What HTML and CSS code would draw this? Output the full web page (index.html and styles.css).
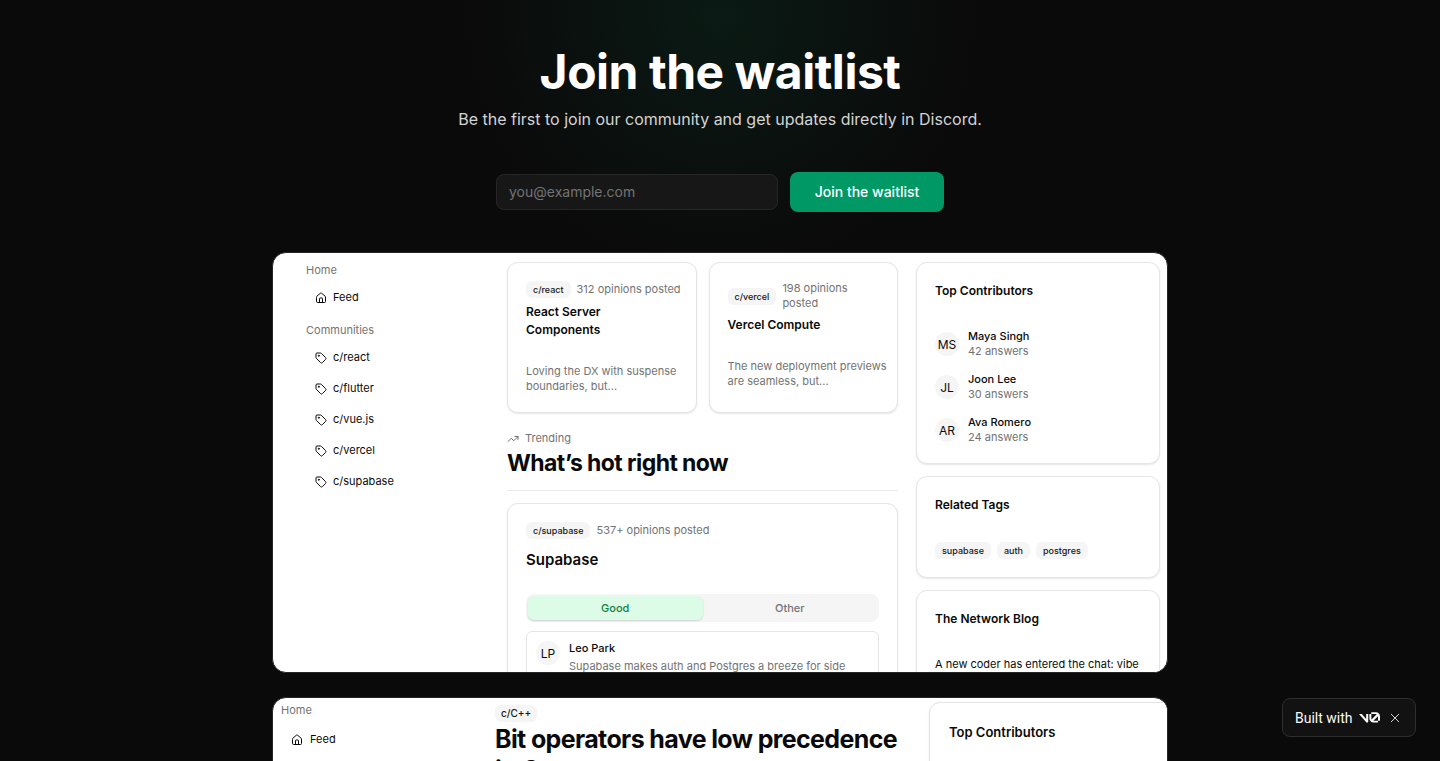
FILE: index.html
```
<!DOCTYPE html>
<html lang="en">
<head>
    <meta charset="UTF-8">
    <meta name="viewport" content="width=device-width, initial-scale=1.0">
    <link rel="stylesheet" href="styles.css">
    <title>Join the waitlist</title>
</head>
<body>

    <!-- Shared icons -->
    <svg class="sprite" aria-hidden="true">
        <symbol id="icon-home" viewBox="0 0 24 24">
            <path d="M15 21v-8a1 1 0 0 0-1-1h-4a1 1 0 0 0-1 1v8"/>
            <path d="M3 10a2 2 0 0 1 .709-1.528l7-5.999a2 2 0 0 1 2.582 0l7 5.999A2 2 0 0 1 21 10v9a2 2 0 0 1-2 2H5a2 2 0 0 1-2-2z"/>
        </symbol>
        <symbol id="icon-tag" viewBox="0 0 24 24">
            <path d="M12.586 2.586A2 2 0 0 0 11.172 2H4a2 2 0 0 0-2 2v7.172a2 2 0 0 0 .586 1.414l8.704 8.704a2.426 2.426 0 0 0 3.42 0l6.58-6.58a2.426 2.426 0 0 0 0-3.42z"/>
            <circle cx="7.5" cy="7.5" r="1"/>
        </symbol>
        <symbol id="icon-trending" viewBox="0 0 24 24">
            <path d="M16 7h6v6"/>
            <path d="m22 7-8.500 8.500-5-5L2 17"/>
        </symbol>
    </svg>

    <main class="page">
        <header class="hero">
            <h1>Join the waitlist</h1>
            <p>Be the first to join our community and get updates directly in Discord.</p>
            <form class="waitlist-form">
                <input type="email" name="email" placeholder="you@example.com" aria-label="Email address" required>
                <button type="submit">Join the waitlist</button>
            </form>
        </header>

        <section class="preview feed-preview">
            <nav class="side-nav">
                <h2>Home</h2>
                <a href="#"><svg class="icon"><use href="#icon-home"/></svg>Feed</a>
                <h2>Communities</h2>
                <a href="#"><svg class="icon"><use href="#icon-tag"/></svg>c/react</a>
                <a href="#"><svg class="icon"><use href="#icon-tag"/></svg>c/flutter</a>
                <a href="#"><svg class="icon"><use href="#icon-tag"/></svg>c/vue.js</a>
                <a href="#"><svg class="icon"><use href="#icon-tag"/></svg>c/vercel</a>
                <a href="#"><svg class="icon"><use href="#icon-tag"/></svg>c/supabase</a>
            </nav>

            <div class="feed">
                <div class="card-row">
                    <article class="card">
                        <div class="meta"><span class="badge">c/react</span><span>312 opinions posted</span></div>
                        <h3>React Server Components</h3>
                        <p>Loving the DX with suspense boundaries, but...</p>
                    </article>
                    <article class="card">
                        <div class="meta"><span class="badge">c/vercel</span><span>198 opinions posted</span></div>
                        <h3>Vercel Compute</h3>
                        <p>The new deployment previews are seamless, but...</p>
                    </article>
                </div>

                <div class="trending">
                    <div class="trending-label"><svg class="icon"><use href="#icon-trending"/></svg>Trending</div>
                    <h2>What’s hot right now</h2>
                </div>

                <article class="card topic">
                    <div class="meta"><span class="badge">c/supabase</span><span>537+ opinions posted</span></div>
                    <h3>Supabase</h3>
                    <div class="tabs" role="tablist">
                        <button type="button" role="tab" aria-selected="true">Good</button>
                        <button type="button" role="tab" aria-selected="false">Other</button>
                    </div>
                    <div class="opinion">
                        <span class="avatar">LP</span>
                        <div>
                            <strong>Leo Park</strong>
                            <p>Supabase makes auth and Postgres a breeze for side</p>
                        </div>
                    </div>
                </article>
            </div>

            <aside class="rail">
                <div class="card">
                    <h3>Top Contributors</h3>
                    <ul class="people">
                        <li><span class="avatar">MS</span><div><strong>Maya Singh</strong><span>42 answers</span></div></li>
                        <li><span class="avatar">JL</span><div><strong>Joon Lee</strong><span>30 answers</span></div></li>
                        <li><span class="avatar">AR</span><div><strong>Ava Romero</strong><span>24 answers</span></div></li>
                    </ul>
                </div>
                <div class="card">
                    <h3>Related Tags</h3>
                    <div class="tags">
                        <span class="badge">supabase</span>
                        <span class="badge">auth</span>
                        <span class="badge">postgres</span>
                    </div>
                </div>
                <div class="card">
                    <h3>The Network Blog</h3>
                    <p class="blog-link">A new coder has entered the chat: vibe</p>
                </div>
            </aside>
        </section>

        <section class="preview question-preview">
            <nav class="side-nav">
                <h2>Home</h2>
                <a href="#"><svg class="icon"><use href="#icon-home"/></svg>Feed</a>
            </nav>
            <div class="question">
                <span class="badge">c/C++</span>
                <h2>Bit operators have low precedence in C++</h2>
            </div>
            <aside class="rail">
                <div class="card">
                    <h3>Top Contributors</h3>
                </div>
            </aside>
        </section>
    </main>

    <div class="built-with">
        <a href="#">Built with
            <svg class="v0-logo" viewBox="0 0 40 20" role="img" aria-label="v0">
                <path d="M23.392 0H32.419C36.605 0 40 3.395 40 7.582V16.080H36.232V7.582C36.232 7.517 36.230 7.454 36.225 7.391L27.402 16.079C27.413 16.080 27.425 16.080 27.436 16.080H36.232V19.640H27.436C23.249 19.640 19.793 16.278 19.793 12.091V3.565H23.561V12.091C23.561 12.696 23.698 13.276 23.946 13.796L33.667 4.006C33.279 3.767 32.849 3.565 32.419 3.565H23.392Z"/>
                <path d="M13.788 19.096L0 3.565H5.329L13.629 12.914V3.565H17.603V17.619C17.603 19.702 15.170 20.654 13.788 19.096Z"/>
            </svg>
        </a>
        <button type="button" aria-label="Close">
            <svg viewBox="0 0 8 8"><path d="m0 0 8 8M8 0 0 8"/></svg>
        </button>
    </div>

</body>
</html>
```

FILE: styles.css
```
* {
    box-sizing: border-box;
}

body {
    margin: 0;
    font-family: Inter, 'Liberation Sans', sans-serif;
    background-color: #0a0a0a;
    background-image: radial-gradient(circle 256px at 50% 16px, #0a1a14, #0a0a0a);
    background-repeat: no-repeat;
    color: #0a0a0a;
}

h1, h2, h3, p, ul {
    margin: 0;
    padding: 0;
}

.sprite {
    display: none;
}

.icon {
    width: 12px;
    height: 12px;
    flex: none;
    fill: none;
    stroke: currentColor;
    stroke-width: 2;
    stroke-linecap: round;
    stroke-linejoin: round;
}

.page {
    max-width: 896px;
    margin: 0 auto;
    padding-top: 48px;
}

/* Hero */
.hero {
    text-align: center;
    margin-bottom: 40px;
}

.hero h1 {
    color: #fff;
    font-size: 48px;
    line-height: 48px;
    font-weight: 700;
    letter-spacing: -0.01em;
}

.hero p {
    margin-top: 11px;
    color: #d4d4d4;
    font-size: 16px;
    line-height: 24px;
}

.waitlist-form {
    display: flex;
    align-items: center;
    gap: 12px;
    max-width: 448px;
    margin: 41px auto 0;
}

.waitlist-form input {
    flex: 1;
    min-width: 0;
    height: 36px;
    padding: 0 12px 2px;
    font: 14px Inter, sans-serif;
    color: #fff;
    background-color: #171717;
    border: 1px solid #262626;
    border-radius: 8px;
}

.waitlist-form input::placeholder {
    color: #737373;
}

.waitlist-form button {
    width: 154px;
    height: 40px;
    padding: 0 0 2px;
    font: 500 14px Inter, sans-serif;
    color: #fff;
    background-color: #009966;
    border: none;
    border-radius: 8px;
    cursor: pointer;
}

/* Product previews */
.preview {
    display: grid;
    margin-bottom: 24px;
    background-color: #fff;
    border: 1px solid #262626;
    border-radius: 14px;
    overflow: hidden;
    font-size: 11px;
    line-height: 15px;
}

.feed-preview {
    grid-template-columns: 201px 1fr 244px;
    column-gap: 18px;
    height: 421px;
    padding: 9px 7px 0 15px;
}

.side-nav {
    padding: 1px 0 0 18px;
}

.side-nav h2 {
    padding-bottom: 7px;
    color: #737373;
    font-size: 11px;
    line-height: 15px;
    font-weight: 400;
}

.side-nav a {
    display: flex;
    align-items: center;
    gap: 6px;
    height: 25px;
    margin-bottom: 6px;
    padding-left: 9px;
    color: #0a0a0a;
    text-decoration: none;
}

.side-nav a + h2 {
    margin-top: 13px;
}

.card {
    padding: 18px;
    background-color: #fff;
    border: 1px solid #e5e5e5;
    border-radius: 11px;
    box-shadow: 0 1px 2px rgba(0, 0, 0, 0.1);
}

.card h3 {
    font-size: 12px;
    line-height: 18px;
    font-weight: 600;
}

.card-row {
    display: grid;
    grid-template-columns: 1fr 1fr;
    gap: 12px;
}

.card-row .card {
    height: 151px;
    padding-right: 14px;
}

.card-row h3 {
    max-width: 120px;
    margin-top: 5px;
}

.card-row p {
    margin: 25px -8px 0 0;
    color: #737373;
}

.meta {
    display: flex;
    align-items: center;
    gap: 6px;
    color: #737373;
}

.badge {
    display: inline-block;
    flex: none;
    padding: 1px 7px;
    color: #171717;
    background-color: #f5f5f5;
    border-radius: 6px;
    font-size: 9px;
    line-height: 15px;
    font-weight: 500;
}

.trending {
    padding: 18px 0 13px;
    margin-bottom: 12px;
    border-bottom: 1px solid #ebebeb;
}

.trending-label {
    display: flex;
    align-items: center;
    gap: 6px;
    color: #737373;
}

.trending h2 {
    margin-top: 3px;
    font-size: 23px;
    line-height: 28px;
    font-weight: 700;
    letter-spacing: -0.025em;
}

.topic h3 {
    margin-top: 9px;
    font-size: 15px;
    line-height: 24px;
}

.tabs {
    display: grid;
    grid-template-columns: 1fr 1fr;
    margin: 22px 0 9px;
    padding: 2px;
    background-color: #f5f5f5;
    border-radius: 8px;
}

.tabs button {
    height: 24px;
    padding: 0 0 1px;
    font: 500 11px Inter, sans-serif;
    color: #737373;
    background: none;
    border: none;
    border-radius: 6px;
}

.tabs button[aria-selected="true"] {
    color: #15803d;
    background-color: #dcfce7;
    box-shadow: 0 1px 2px rgba(0, 0, 0, 0.15);
}

.opinion {
    display: flex;
    gap: 9px;
    padding: 9px;
    border: 1px solid #e5e5e5;
    border-radius: 6px;
}

.opinion p {
    margin-top: 3px;
    color: #737373;
}

strong {
    display: block;
    font-weight: 500;
}

.avatar {
    display: flex;
    align-items: center;
    justify-content: center;
    flex: none;
    width: 24px;
    height: 24px;
    background-color: #f5f5f5;
    border-radius: 50%;
    font-size: 12px;
}

.rail {
    display: flex;
    flex-direction: column;
    gap: 12px;
}

.rail .card {
    padding-top: 19px;
}

.people {
    display: grid;
    gap: 13px;
    margin-top: 29px;
    list-style: none;
}

.people li {
    display: flex;
    align-items: center;
    gap: 9px;
}

.people div span {
    color: #737373;
}

.tags {
    display: flex;
    gap: 6px;
    margin-top: 28px;
}

.blog-link {
    margin-top: 29px;
}

/* Question page preview */
.question-preview {
    grid-template-columns: 205px 1fr 238px;
    column-gap: 9px;
    height: 421px;
    padding: 4px 0 0 8px;
}

.question-preview .side-nav {
    padding-left: 0;
}

.question-preview .side-nav h2 {
    padding-bottom: 9px;
}

.question-preview .side-nav a {
    padding-left: 10px;
    gap: 7px;
}

.question {
    padding-top: 3px;
}

.question .badge {
    padding: 1px 6px;
    font-size: 10px;
}

.question h2 {
    margin-top: 2px;
    font-size: 25px;
    line-height: 31px;
    font-weight: 700;
    letter-spacing: -0.025em;
}

/* The card runs off the right side of the frame */
.question-preview .rail {
    margin-right: -12px;
}

.question-preview .card {
    height: 220px;
    padding: 20px 19px;
}

.question-preview .card h3 {
    font-size: 13px;
}

/* v0 banner */
.built-with {
    position: fixed;
    right: 24px;
    bottom: 24px;
    display: flex;
    align-items: center;
    gap: 11px;
    width: 134px;
    height: 39px;
    padding-left: 12px;
    background-color: #121212;
    border: 1px solid #2e2e2e;
    border-radius: 8px;
}

.built-with a {
    display: flex;
    align-items: center;
    gap: 6px;
    color: #fafafa;
    font: 14px Roboto, sans-serif;
    text-decoration: none;
}

.v0-logo {
    width: 21px;
    height: 11px;
    fill: currentColor;
}

.built-with button {
    display: flex;
    padding: 0;
    background: none;
    border: none;
}

.built-with button svg {
    width: 8px;
    height: 8px;
    fill: none;
    stroke: #d4d4d4;
    stroke-width: 1;
}
```
